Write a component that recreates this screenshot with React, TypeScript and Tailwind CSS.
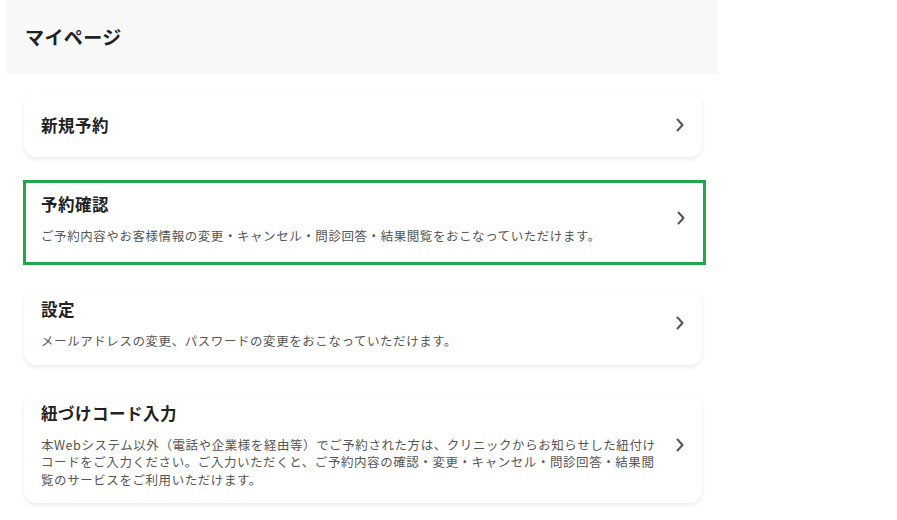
const items = [
	{
		title: "新規予約",
		h: "h-[64px]",
		mt: "mt-[19px]",
	},
	{
		title: "予約確認",
		desc: "ご予約内容やお客様情報の変更・キャンセル・問診回答・結果閲覧をおこなっていただけます。",
		h: "h-[85px]",
		mt: "mt-[23px]",
		active: true,
	},
	{
		title: "設定",
		desc: "メールアドレスの変更、パスワードの変更をおこなっていただけます。",
		h: "h-[75px]",
		mt: "mt-[25px]",
	},
	{
		title: "紐づけコード入力",
		desc: "本Webシステム以外（電話や企業様を経由等）でご予約された方は、クリニックからお知らせした紐付けコードをご入力ください。ご入力いただくと、ご予約内容の確認・変更・キャンセル・問診回答・結果閲覧のサービスをご利用いただけます。",
		h: "h-[108px]",
		mt: "mt-[30px]",
	},
];

const Chevron = () => (
	<svg width="10" height="16" viewBox="0 0 10 16" className="shrink-0">
		<polyline
			points="2.5,2.5 7.5,8 2.5,13.5"
			fill="none"
			stroke="#555"
			strokeWidth="2"
			strokeLinecap="round"
			strokeLinejoin="round"
		/>
	</svg>
);

const App = () => {
	return (
		<div
			className="min-h-[520px] w-[897px] bg-white text-[#222]"
			style={{ fontFamily: '"Noto Sans CJK JP", "Noto Sans", sans-serif' }}
		>
			<div className="ml-[6px] w-[712px]">
				<div className="flex h-[74px] items-center bg-[#f8f8f8] pl-[19px]">
					<h1 className="text-[19px] font-bold tracking-[0.02em]">マイページ</h1>
				</div>
				<div className="pl-[17px] pr-[12px]">
					{items.map((item) => (
						<div
							key={item.title}
							className={`${item.mt} ${item.h} flex items-center bg-white ${item.desc ? "pb-[9px]" : ""} ${
								item.active
									? "border-[3px] border-[#22a84a]"
									: "mr-[4px] ml-[1px] rounded-xl shadow-[0_2px_4px_rgba(0,0,0,0.09)]"
							}`}
						>
							<div className={`flex-1 ${item.active ? "pl-[15px]" : "pl-[17px]"}`}>
								<div className="text-[16.5px] leading-[24px] font-bold tracking-[0.03em]">
									{item.title}
								</div>
								{item.desc && (
									<p className="mt-[11px] max-w-[620px] text-[12.5px] leading-[17.5px] tracking-[0.045em] text-[#555]">
										{item.desc}
									</p>
								)}
							</div>
							<div className={item.active ? "pr-[17px] pl-4" : "pr-[17px] pl-4"}>
								<Chevron />
							</div>
						</div>
					))}
				</div>
			</div>
		</div>
	);
};

export default App;
